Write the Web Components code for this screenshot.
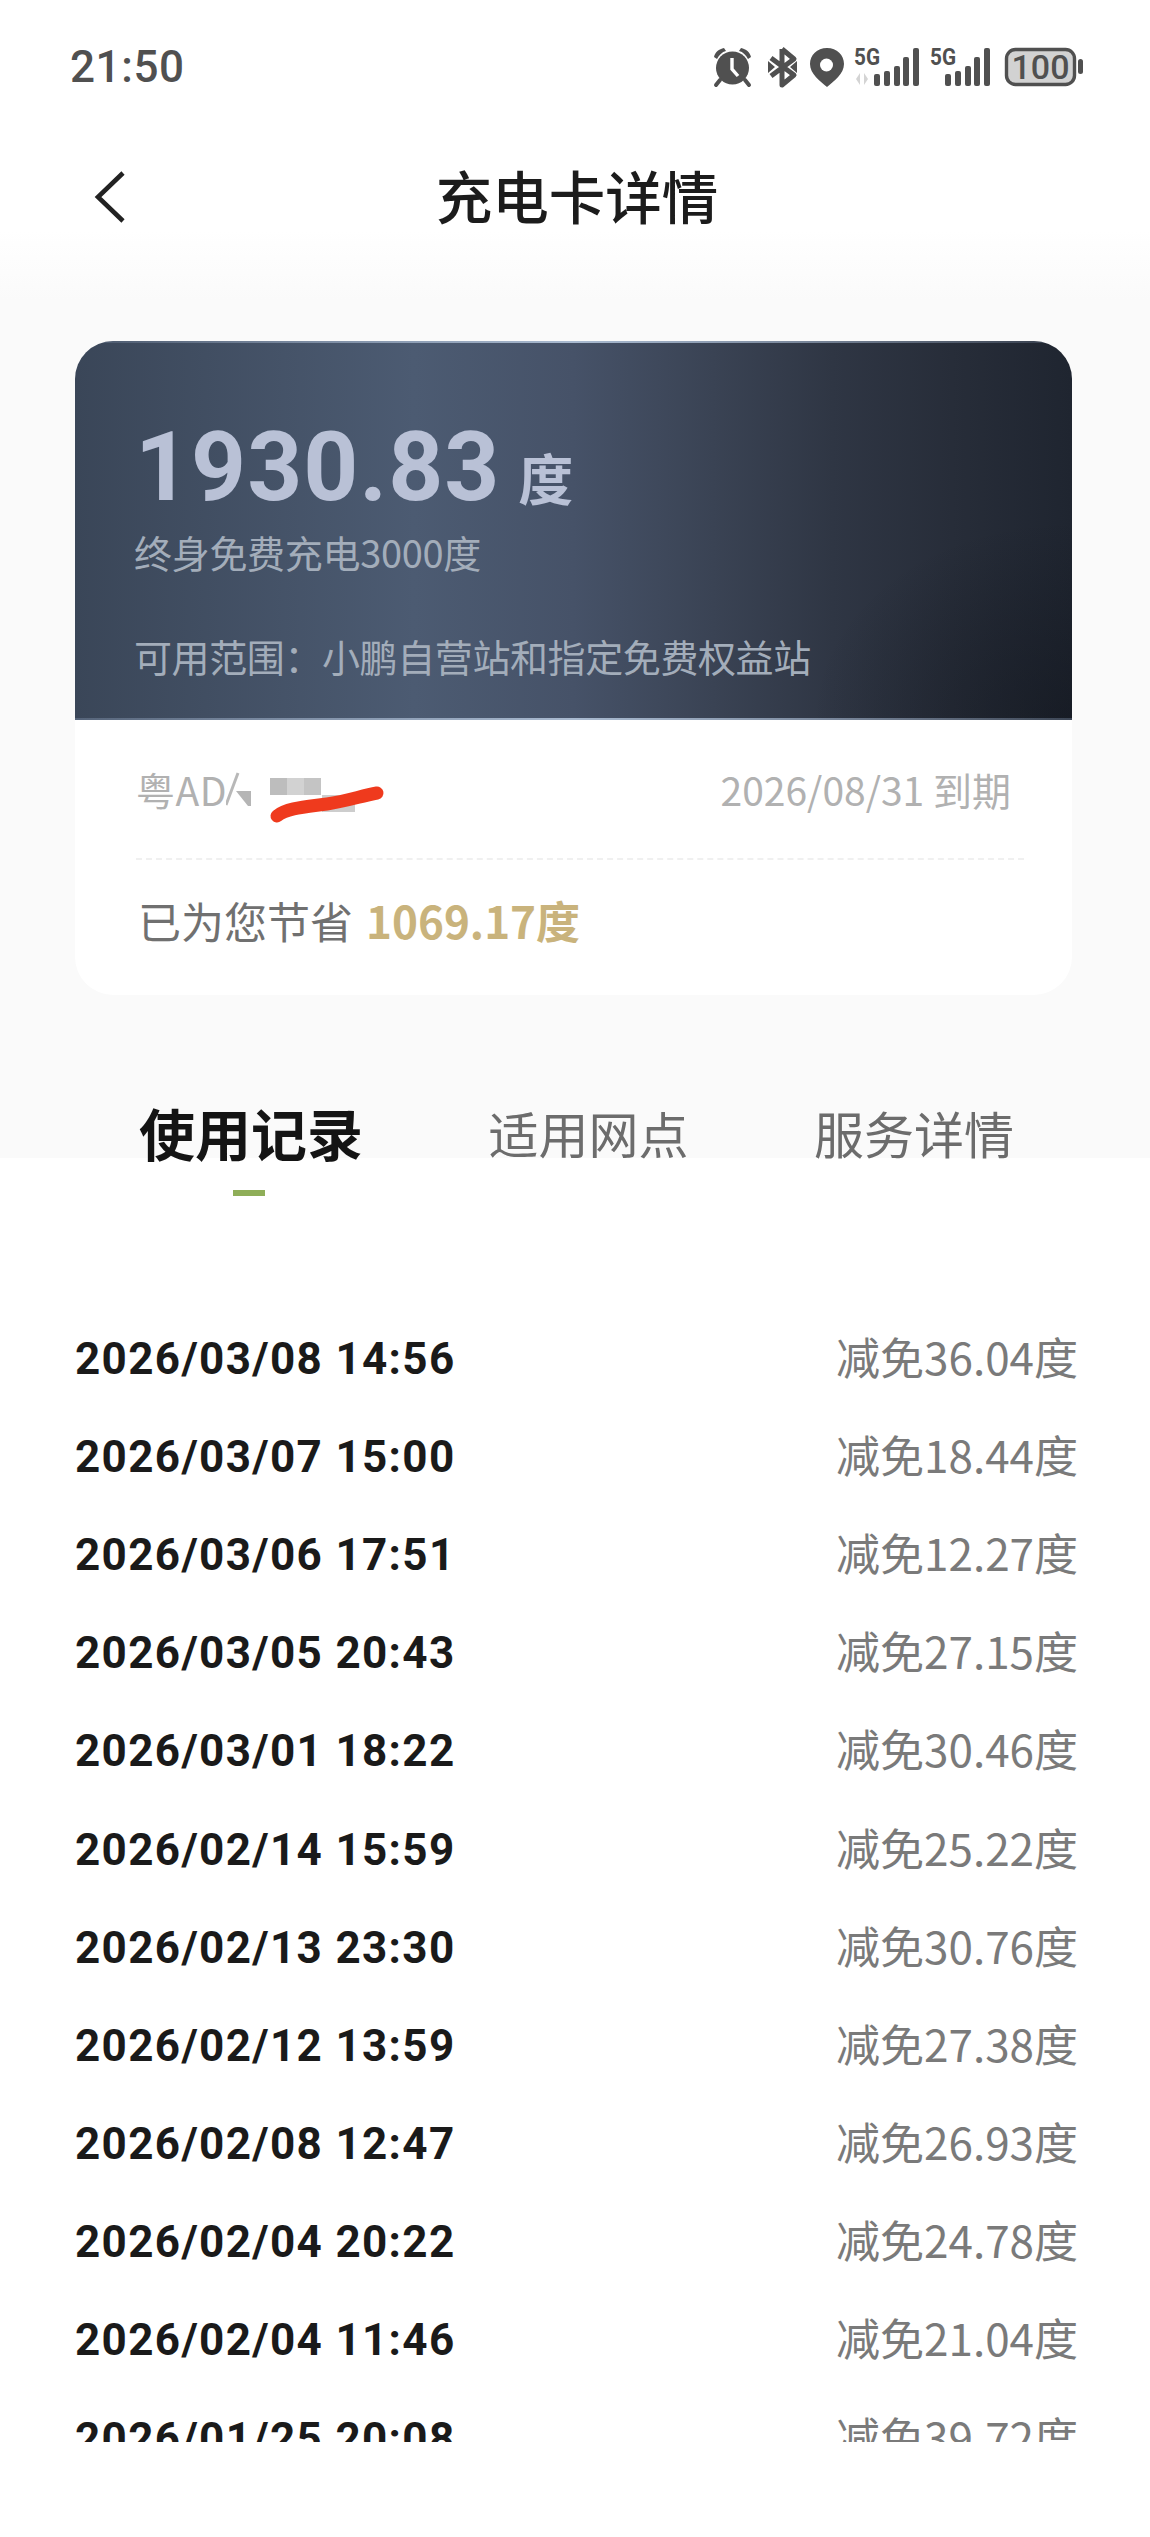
<!DOCTYPE html>
<html lang="zh-CN">
<head>
<meta charset="utf-8">
<title>充电卡详情</title>
<style>
  html, body { margin: 0; background: #fff; }
  body { font-family: "Noto Sans CJK SC", "Noto Sans", sans-serif; }
</style>
</head>
<body>
<app-screen>
  <status-bar time="21:50"></status-bar>
  <nav-bar>充电卡详情</nav-bar>
  <charge-card></charge-card>
  <tab-bar></tab-bar>
  <record-list>
    <record-row time="2026/03/08 14:56" amount="减免36.04度"></record-row>
    <record-row time="2026/03/07 15:00" amount="减免18.44度"></record-row>
    <record-row time="2026/03/06 17:51" amount="减免12.27度"></record-row>
    <record-row time="2026/03/05 20:43" amount="减免27.15度"></record-row>
    <record-row time="2026/03/01 18:22" amount="减免30.46度"></record-row>
    <record-row time="2026/02/14 15:59" amount="减免25.22度"></record-row>
    <record-row time="2026/02/13 23:30" amount="减免30.76度"></record-row>
    <record-row time="2026/02/12 13:59" amount="减免27.38度"></record-row>
    <record-row time="2026/02/08 12:47" amount="减免26.93度"></record-row>
    <record-row time="2026/02/04 20:22" amount="减免24.78度"></record-row>
    <record-row time="2026/02/04 11:46" amount="减免21.04度"></record-row>
    <record-row time="2026/01/25 20:08" amount="减免39.72度"></record-row>
  </record-list>
</app-screen>

<script>
class AppScreen extends HTMLElement {
  constructor() {
    super();
    this.attachShadow({mode: 'open'}).innerHTML = `
      <style>
        :host {
          display: flex;
          flex-direction: column;
          width: 1150px;
          height: 2537px;
          overflow: hidden;
          background: linear-gradient(#fff 0, #fff 230px, #fafafa 300px, #fafafa 1158px, #fff 1158px);
        }
      </style>
      <slot></slot>
    `;
  }
}

class StatusBar extends HTMLElement {
  constructor() {
    super();
    this.attachShadow({mode: 'open'}).innerHTML = `
      <style>
        :host {
          display: flex;
          justify-content: space-between;
          align-items: center;
          height: 134px;
          padding: 0 67px 0 70px;
          color: #505050;
        }
        .time { font: 500 44px/1 Roboto, sans-serif; letter-spacing: .6px; }
        .icons { display: flex; align-items: center; gap: 0; }
        svg { display: block; fill: #505050; }
        text { font-family: Roboto, sans-serif; }
      </style>
      <span class="time">${this.getAttribute('time')}</span>
      <div class="icons">
        <svg width="370" height="62" viewBox="713 36 370 62">
          <!-- alarm -->
          <circle cx="732.5" cy="68" r="16.5"/>
          <path d="M714 57c1-5 5-8 10-9l2 3c-4 1-7 4-9 8zM751 57c-1-5-5-8-10-9l-2 3c4 1 7 4 9 8z"/>
          <path d="M720 80l-4 5M745 80l4 5" stroke="#505050" stroke-width="4" stroke-linecap="round"/>
          <path d="M732 58v11l6 7" fill="none" stroke="#fff" stroke-width="3.4"/>
          <!-- bluetooth -->
          <path d="M782 49v36l12-10-23-17M782 49l12 10-23 17" fill="none" stroke="#505050" stroke-width="5" stroke-linejoin="round"/>
          <path d="M768 61l7 6-7 6zM797 61l-7 6 7 6z"/>
          <!-- location -->
          <path d="M827 48c-10 0-17 7-17 16 0 10 10 17 17 23 7-6 17-13 17-23 0-9-7-16-17-16z"/>
          <circle cx="826.5" cy="65" r="6.5" fill="#fff"/>
          <!-- first sim -->
          <text x="854" y="65" font-size="24" font-weight="700" textLength="26" lengthAdjust="spacingAndGlyphs">5G</text>
          <path d="M860 73v12l-4-6zM864 85V73l4 6z" fill="#d4d4d4"/>
          <rect x="874" y="74" width="6" height="12" rx="2"/>
          <rect x="884" y="71" width="6" height="15" rx="2"/>
          <rect x="894" y="66" width="6" height="20" rx="2"/>
          <rect x="903" y="57" width="6" height="29" rx="2"/>
          <rect x="913" y="48" width="6" height="38" rx="2"/>
          <!-- second sim -->
          <text x="930" y="65" font-size="24" font-weight="700" textLength="26" lengthAdjust="spacingAndGlyphs">5G</text>
          <rect x="945" y="74" width="6" height="12" rx="2"/>
          <rect x="955" y="71" width="6" height="15" rx="2"/>
          <rect x="965" y="66" width="6" height="20" rx="2"/>
          <rect x="974" y="57" width="6" height="29" rx="2"/>
          <rect x="984" y="48" width="6" height="38" rx="2"/>
          <!-- battery -->
          <rect x="1006.5" y="49.5" width="68" height="35" rx="9" fill="#d2d2d2" stroke="#505050" stroke-width="3.4"/>
          <rect x="1078" y="59" width="5" height="15" rx="2.5"/>
          <text x="1040.5" y="78.5" font-size="33" font-weight="500" text-anchor="middle" textLength="58" lengthAdjust="spacingAndGlyphs">100</text>
        </svg>
      </div>
    `;
  }
}

class NavBar extends HTMLElement {
  constructor() {
    super();
    this.attachShadow({mode: 'open'}).innerHTML = `
      <style>
        :host {
          display: flex;
          position: relative;
          justify-content: center;
          align-items: center;
          height: 126px;
          padding: 0 0 6px 4px;
          box-sizing: border-box;
          font-size: 56.5px;
          line-height: 1;
          font-weight: 500;
          color: #1c1c1c;
        }
        .back { position: absolute; left: 92px; top: 36px; }
      </style>
      <svg class="back" width="36" height="54" viewBox="0 0 36 54">
        <path d="M31 3L6 27l25 24" fill="none" stroke="#222" stroke-width="4.6"/>
      </svg>
      <slot></slot>
    `;
  }
}

class ChargeCard extends HTMLElement {
  constructor() {
    super();
    this.attachShadow({mode: 'open'}).innerHTML = `
      <style>
        :host {
          display: block;
          margin: 81px 78px 0 75px;
          border-radius: 38px;
          background: #fff;
          overflow: hidden;
        }
        .top {
          box-sizing: border-box;
          height: 379px;
          padding: 78px 0 0 59px;
          color: #a3adba;
          background:
            linear-gradient(90deg, rgba(150,170,200,.15), #a9bad0 50%, rgba(150,170,200,.15)) top / 100% 2px no-repeat,
            linear-gradient(90deg, rgba(150,170,200,.3), #a9bad0 50%, rgba(150,170,200,.3)) bottom / 100% 2px no-repeat,
            radial-gradient(260px 200px at 100% 100%, rgba(14,17,24,.45), rgba(14,17,24,0) 100%),
            linear-gradient(90deg, #3a4658 0%, #4c5b72 34%, #465268 50%, #3a4354 64%, #2f3644 76%, #272d39 88%, #1f2530 100%);
        }
        .balance { display: flex; align-items: baseline; margin-left: 1px; color: #b9c1d6; font-weight: 700; }
        .num { font: 700 96px/96px Roboto, sans-serif; letter-spacing: 1px; }
        .unit { font-size: 55px; line-height: 96px; margin-left: 18px; }
        .line { font-size: 38px; line-height: 52px; }
        .total { margin-top: 2px; letter-spacing: -.3px; }
        .scope { margin-top: 52px; letter-spacing: -.4px; }
        .bottom { padding: 0 59px 0 63px; height: 275px; box-sizing: border-box; }
        .plate-row {
          display: flex;
          justify-content: space-between;
          align-items: center;
          height: 138px;
          margin: 0 -11px 0 -2px;
          padding-right: 13px;
          font-size: 39px;
          color: #b1b1b1;
          position: relative;
          border-bottom: 2px dashed #f0f0f0;
        }
        .plate { display: flex; align-items: center; letter-spacing: .5px; }
        .plate svg { margin-left: -1px; }
        .scribble { position: absolute; left: 0; top: 0; }
        .save-row { display: flex; align-items: center; height: 120px; font-size: 43px; color: #707070; gap: 13px; }
        .save-row b { font: 700 44px "Noto Sans CJK SC", sans-serif; color: #c9b37c; }
      </style>
      <div class="top">
        <div class="balance"><span class="num">1930.83</span><span class="unit">度</span></div>
        <div class="line total">终身免费充电3000度</div>
        <div class="line scope">可用范围：小鹏自营站和指定免费权益站</div>
      </div>
      <div class="bottom">
        <div class="plate-row">
          <div class="plate"><span>粤AD</span><svg width="26" height="36" viewBox="0 0 26 36"><path d="M0 34L12 2" stroke="#b8b8b8" stroke-width="3" fill="none"/><path d="M10 20l15 0v15h-3z" fill="#b5b5b5"/></svg></div>
          <span>2026/08/31 到期</span>
          <svg class="scribble" width="320" height="110" viewBox="0 0 320 110">
            <rect x="134" y="58" width="17" height="17" fill="#bdbdbd"/>
            <rect x="151" y="58" width="17" height="17" fill="#d2d2d2"/>
            <rect x="168" y="58" width="17" height="17" fill="#c4c4c4"/>
            <rect x="186" y="75" width="33" height="17" fill="#cdcdcd"/>
            <path d="M141 96c10-8 28-9 50-12 20-3 34-8 50-11" fill="none" stroke="#ef3a1d" stroke-width="13" stroke-linecap="round"/>
          </svg>
        </div>
        <div class="save-row"><span>已为您节省</span><b>1069.17度</b></div>
      </div>
    `;
  }
}

class TabBar extends HTMLElement {
  constructor() {
    super();
    this.attachShadow({mode: 'open'}).innerHTML = `
      <style>
        :host {
          display: flex;
          position: relative;
          justify-content: space-between;
          align-items: center;
          height: 90px;
          margin-top: 92px;
          padding: 0 136px 0 139px;
          color: #6c6c6c;
          font-size: 50px;
          line-height: 1;
        }
        .active { color: #141414; font-size: 56px; font-weight: 700; }
        .mark { position: absolute; left: 233px; top: 103px; width: 32px; height: 6px; background: #8fae58; }
      </style>
      <span class="active">使用记录</span>
      <span>适用网点</span>
      <span>服务详情</span>
      <i class="mark"></i>
    `;
  }
}

class RecordList extends HTMLElement {
  constructor() {
    super();
    this.attachShadow({mode: 'open'}).innerHTML = `
      <style>
        :host {
          display: grid;
          grid-auto-rows: 98.2px;
          height: 1134px;
          margin-top: 131px;
          padding: 0 72px 0 75px;
          overflow: hidden;
          background: #fff;
        }
      </style>
      <slot></slot>
    `;
  }
}

class RecordRow extends HTMLElement {
  constructor() {
    super();
    this.attachShadow({mode: 'open'}).innerHTML = `
      <style>
        :host { display: flex; justify-content: space-between; align-items: center; }
        .time { font: 700 44px/1 Roboto, sans-serif; letter-spacing: 1.35px; color: #1a1a1a; padding-top: 3px; }
        .amount { font-size: 44px; line-height: 1; color: #7a7a7a; padding-bottom: 3px; }
      </style>
      <span class="time">${this.getAttribute('time')}</span>
      <span class="amount">${this.getAttribute('amount')}</span>
    `;
  }
}

customElements.define('app-screen', AppScreen);
customElements.define('status-bar', StatusBar);
customElements.define('nav-bar', NavBar);
customElements.define('charge-card', ChargeCard);
customElements.define('tab-bar', TabBar);
customElements.define('record-list', RecordList);
customElements.define('record-row', RecordRow);
</script>
</body>
</html>
